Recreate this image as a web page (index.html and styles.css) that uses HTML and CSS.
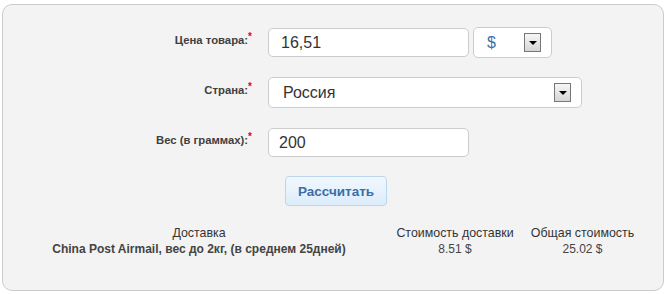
FILE: index.html
```html
<!DOCTYPE html>
<html>
<head>
    <title>Калькулятор доставки</title>
    <link rel="stylesheet" href="styles.css">
</head>
<body>
    <div class="calc">
        <div class="form">
            <label class="lbl">Цена товара:<sup>*</sup></label>
            <div class="field">
                <input type="text" class="inp price" value="16,51">
                <div class="sel currency">
                    <span>$</span>
                    <span class="arrow"></span>
                </div>
            </div>

            <label class="lbl">Страна:<sup>*</sup></label>
            <div class="field">
                <div class="sel country">
                    <span>Россия</span>
                    <span class="arrow"></span>
                </div>
            </div>

            <label class="lbl">Вес (в граммах):<sup>*</sup></label>
            <div class="field">
                <input type="text" class="inp weight" value="200">
            </div>

            <div></div>
            <div class="actions">
                <button class="btn">Рассчитать</button>
            </div>
        </div>

        <div class="result">
            <div class="th">Доставка</div>
            <div class="th">Стоимость доставки</div>
            <div class="th">Общая стоимость</div>
            <div class="td name">China Post Airmail, вес до 2кг, (в среднем 25дней)</div>
            <div class="td">8.51 $</div>
            <div class="td">25.02 $</div>
        </div>
    </div>
</body>
</html>
```

FILE: styles.css
```css
body { margin: 4px 4px 0 2px; font-family: Arial, "Liberation Sans", sans-serif; color: #444; background: #fff; }
.calc { height: 287px; box-sizing: border-box; background: #f3f3f3; border: 1px solid #cbcbcb; border-radius: 10px; padding-top: 22px; }

.form { display: grid; grid-template-columns: 249px 1fr; column-gap: 16px; row-gap: 19px; grid-auto-rows: 31px; }
.lbl { text-align: right; font-size: 11.3px; font-weight: bold; line-height: 16px; padding-top: 5px; color: #3f3f3f; }
.lbl sup { color: #e00; font-size: 10px; line-height: 0; vertical-align: 4px; }
.field { display: flex; align-items: center; gap: 4px; }

.inp { box-sizing: border-box; height: 29px; width: 201px; margin: 0; padding: 0 12px; border: 1px solid #ccc; border-radius: 5px; background: #fff; font-family: inherit; font-size: 16px; color: #333; outline: none; }
.weight { padding-left: 10px; }

.sel { box-sizing: border-box; height: 31px; display: flex; align-items: center; justify-content: space-between; background: #fff; border: 1px solid #ccc; border-radius: 5px; font-size: 16px; color: #333; }
.currency { width: 79px; padding: 0 10px 0 13px; }
.currency span:first-child { color: #3d6fa8; }
.country { width: 314px; padding: 0 10px 0 14px; }
.arrow { width: 17px; height: 19px; box-sizing: border-box; border: 1px solid #777; background: linear-gradient(#f6f6f6, #d6d6d6); position: relative; }
.arrow::after { content: ""; position: absolute; left: 4px; top: 7px; border-left: 4px solid transparent; border-right: 4px solid transparent; border-top: 4px solid #000; }

.actions { padding-left: 17px; }
.btn { width: 102px; height: 30px; margin-top: -1px; border: 1px solid #bcd6ee; border-radius: 4px; background: linear-gradient(#f1f8fe, #dcecfb); color: #3a6ea8; font-family: inherit; font-size: 13.5px; font-weight: bold; }

.result { display: grid; grid-template-columns: 376px 136px 119px; margin: 17px 0 0 8px; font-size: 12px; line-height: 16px; text-align: center; }
.th { color: #333; font-size: 12.4px; }
.name { font-weight: bold; }
```
